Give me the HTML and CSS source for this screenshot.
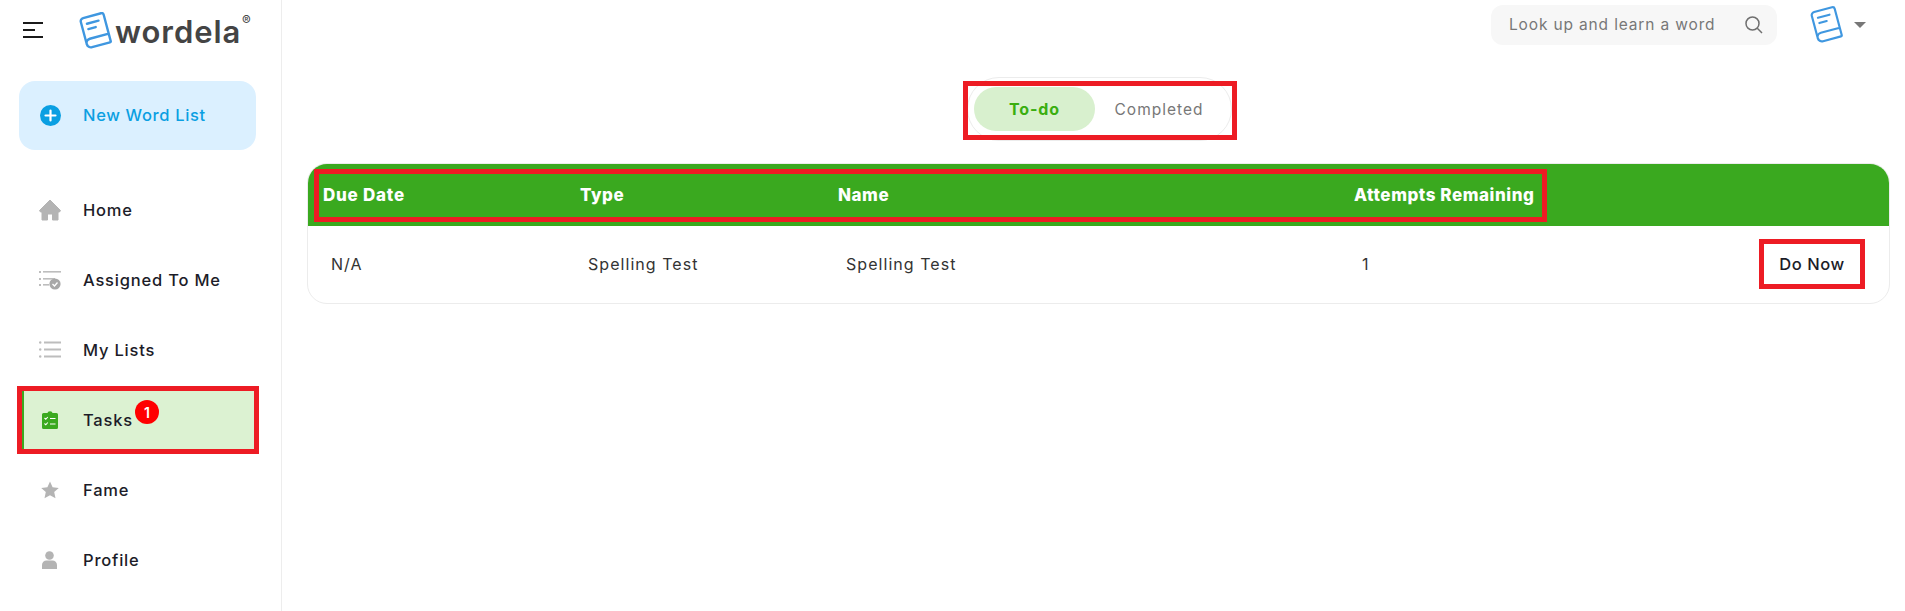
FILE: index.html
```html
<!DOCTYPE html>
<html lang="en">
<head>
<meta charset="utf-8">
<title>Wordela Tasks</title>
<link rel="stylesheet" href="styles.css">
</head>
<body>
<div class="app">
  <aside class="sidebar">
    <div class="brand">
      <svg class="burger" viewBox="0 0 20 16"><path d="M0 1h20M0 8h12M0 15h20" stroke="#1a1a1a" stroke-width="2" fill="none"/></svg>
      <svg class="book" viewBox="0 0 32 34"><g fill="none" stroke="#3f97e0" stroke-width="2.2" stroke-linecap="round" stroke-linejoin="round" transform="rotate(-15 16 17)"><path d="M5 26V6a3 3 0 0 1 3-3h17a2 2 0 0 1 2 2v25a1 1 0 0 1-1 1H9a4 4 0 0 1-4-4a4 4 0 0 1 4-4h18"/><path d="M10 9h11M10 14h7"/></g></svg>
      <span class="logo-text">wordela</span><span class="reg">®</span>
    </div>
    <div class="new-list">
      <svg class="plus" viewBox="0 0 21 21"><circle cx="10.5" cy="10.5" r="10.5" fill="#0a9fe2"/><path d="M5.5 10.5h10M10.5 5.5v10" stroke="#fff" stroke-width="2.2" stroke-linecap="round"/></svg>
      <span class="new-label">New Word List</span>
    </div>
    <nav class="nav">
      <div class="nav-item">
        <svg class="nav-icon" viewBox="0 0 22 22"><path d="M11 1 0.5 11.5l1 1.5H3v8h5.5v-6h5v6H19v-8h1.5l1-1.5z" fill="#b4b4b4" stroke="#b4b4b4" stroke-linejoin="round"/></svg>
        <span>Home</span>
      </div>
      <div class="nav-item">
        <svg class="nav-icon" viewBox="0 0 22 22"><g fill="#bdbdbd"><rect x="0" y="2" width="2" height="2"/><rect x="4" y="2" width="18" height="1.6"/><rect x="0" y="9" width="2" height="2"/><rect x="4" y="9" width="12" height="1.6"/><rect x="0" y="15" width="2" height="2"/><rect x="4" y="15" width="6" height="1.6"/></g><circle cx="16" cy="15" r="5.6" fill="#a8a8a8"/><path d="M13.5 15l2 2 3-3.5" stroke="#fff" stroke-width="1.3" fill="none"/></svg>
        <span>Assigned To Me</span>
      </div>
      <div class="nav-item">
        <svg class="nav-icon" viewBox="0 0 22 22"><g fill="#bdbdbd"><circle cx="1.2" cy="3.5" r="1.3"/><rect x="5" y="2.5" width="17" height="2"/><circle cx="1.2" cy="10.5" r="1.3"/><rect x="5" y="9.5" width="17" height="2"/><circle cx="1.2" cy="17.5" r="1.3"/><rect x="5" y="16.5" width="17" height="2"/></g></svg>
        <span>My Lists</span>
      </div>
      <div class="nav-item active">
        <svg class="nav-icon task-icon" viewBox="0 0 16 18"><path d="M1.5 2H5.5a2.5 1.8 0 0 1 5 0H14.500a1.500 1.500 0 0 1 1.500 1.500V16.500a1.500 1.500 0 0 1-1.500 1.500H1.500A1.500 1.500 0 0 1 0 16.500V3.500A1.500 1.500 0 0 1 1.500 2z" fill="#3aa91f"/><path d="M2.500 7l1.300 1.300 2-2.300M2.500 12.500l1.300 1.300 2-2.300M8 7.500h5.500M8 13h5.500" stroke="#fff" stroke-width="1.100" fill="none"/></svg>
        <span class="task-label">Tasks</span><span class="badge">1</span>
      </div>
      <div class="nav-item">
        <svg class="nav-icon star" viewBox="0 0 18 18"><path d="M9 .5l2.600 5.700 6.200.7-4.600 4.200 1.300 6.100L9 14.200 3.500 17.200l1.300-6.100L.2 6.900l6.200-.7z" fill="#b4b4b4"/></svg>
        <span>Fame</span>
      </div>
      <div class="nav-item">
        <svg class="nav-icon person" viewBox="0 0 15 18"><circle cx="7.500" cy="4.500" r="4.300" fill="#b4b4b4"/><path d="M0 18v-4a4.500 4.500 0 0 1 4.500-4.500h6A4.500 4.500 0 0 1 15 14v4z" fill="#b4b4b4"/></svg>
        <span>Profile</span>
      </div>
    </nav>
  </aside>
  <main class="main">
    <header class="topbar">
      <div class="search">
        <span class="search-text">Look up and learn a word</span>
        <svg class="search-icon" viewBox="0 0 18 18"><circle cx="7.500" cy="7.500" r="6.500" fill="none" stroke="#6f6f6f" stroke-width="1.500"/><path d="M12.300 12.300 17 17" stroke="#6f6f6f" stroke-width="1.500"/></svg>
      </div>
      <svg class="avatar" viewBox="0 0 32 34"><g fill="none" stroke="#3f97e0" stroke-width="2" stroke-linecap="round" stroke-linejoin="round" transform="rotate(-15 16 17)"><path d="M5 26V6a3 3 0 0 1 3-3h17a2 2 0 0 1 2 2v25a1 1 0 0 1-1 1H9a4 4 0 0 1-4-4a4 4 0 0 1 4-4h18"/><path d="M10 9h11M10 14h7"/></g></svg>
      <span class="caret"></span>
    </header>
    <div class="tabs">
      <span class="tab tab-on">To-do</span>
      <span class="tab tab-off">Completed</span>
      <span class="mark mark-tabs"></span>
    </div>
    <section class="card">
      <div class="row head">
        <span class="first">Due Date</span>
        <span>Type</span>
        <span>Name</span>
        <span>Attempts Remaining</span>
        <span class="mark mark-head"></span>
      </div>
      <div class="row body">
        <span class="first">N/A</span>
        <span>Spelling Test</span>
        <span>Spelling Test</span>
        <span>1</span>
        <span class="do-now">Do Now</span>
      </div>
    </section>
  </main>
</div>
</body>
</html>
```
FILE: styles.css
```css
* { box-sizing: border-box; }
html, body { margin: 0; height: 100%; overflow: hidden; }
body { background: #fff; font-family: Inter, "Open Sans", sans-serif; color: #1c1c28; }
.app { display: flex; height: 611px; }

.sidebar { width: 282px; flex: none; border-right: 1px solid #ededed; }
.brand { display: flex; align-items: center; height: 61px; padding: 0 0 0 23px; position: relative; }
.burger { width: 20px; height: 16px; margin-top: -1px; }
.book { width: 35px; height: 37px; margin-left: 35px; }
.logo-text { font-weight: 600; font-size: 31px; letter-spacing: 0.95px; color: #444; margin-left: 2px; margin-top: 1px; }
.reg { font-size: 13px; color: #444; position: absolute; left: 242px; top: 12px; }

.new-list { display: flex; align-items: center; height: 69px; margin: 20px 25px 0 19px; padding-left: 21px; border-radius: 16px; background: #dbf0ff; color: #0a9fe2; font-size: 16.500px; font-weight: 500; letter-spacing: .65px; }
.new-label { margin-top: -2px; }
.plus { width: 21px; height: 21px; margin-right: 22px; }

.nav { display: flex; flex-direction: column; gap: 12px; margin: 31px 27px 0 22px; }
.nav-item { display: flex; align-items: center; height: 58px; padding-left: 17px; font-size: 16.500px; font-weight: 500; letter-spacing: .8px; position: relative; }
.nav-icon { width: 22px; height: 22px; margin-right: 22px; flex: none; }
.task-icon { width: 16px; height: 18px; margin-left: 3px; margin-right: 25px; }
.star { width: 18px; height: 18px; margin-left: 2px; margin-right: 24px; }
.person { width: 15px; height: 18px; margin-left: 3px; margin-right: 26px; }
.active { background: #dcf2d2; border-left: 2px solid #3aa91f; padding-left: 15px; outline: 5px solid #ed1c24; }
.task-label { margin-right: 2px; }
.badge { position: absolute; left: 111px; top: 9px; width: 24px; height: 24px; border-radius: 50%; background: #f00; color: #fff; font-size: 14px; font-weight: 600; letter-spacing: 0; display: flex; align-items: center; justify-content: center; }

.main { flex: 1; min-width: 0; padding: 0 15px 0 25px; }
.topbar { display: flex; align-items: flex-start; justify-content: flex-end; height: 77px; padding-top: 5px; margin-right: 24px; }
.search { display: flex; align-items: center; justify-content: space-between; width: 286px; height: 40px; padding: 0 14px 0 18px; border-radius: 12px; background: #f7f7f7; margin-right: 32px; }
.search-text { font-size: 15.500px; color: #777; letter-spacing: .85px; margin-top: -2px; }
.search-icon { width: 18px; height: 18px; }
.avatar { width: 35px; height: 37px; margin-top: 1px; margin-right: 10px; }
.caret { width: 0; height: 0; margin-top: 17px; border-left: 6.500px solid transparent; border-right: 6.500px solid transparent; border-top: 6.500px solid #777; }

.tabs { display: flex; align-items: center; position: relative; width: 265px; height: 64px; margin: 0 0 22px 660px; padding-left: 6px; border: 1px solid #ececec; border-radius: 32px; }
.tab { width: 121px; height: 44px; border-radius: 22px; display: flex; align-items: center; justify-content: center; font-size: 15.500px; color: #777; letter-spacing: 1px; }
.tab-off { padding-left: 7px; }
.tab-on { background: #d8f0ce; color: #3aae10; font-size: 16px; font-weight: 700; letter-spacing: .9px; }
.mark { position: absolute; border: 5px solid #ed1c24; pointer-events: none; }
.mark-tabs { left: -5px; top: 3px; width: 274px; height: 59px; }

.card { border: 1px solid #ececec; border-radius: 20px; overflow: hidden; height: 141px; }
.row { display: grid; grid-template-columns: 258px 258px 516px 1fr auto; align-items: center; padding-left: 6px; position: relative; }
.head { height: 62px; background: #3aa91f; color: #fff; font-size: 17px; font-weight: 800; letter-spacing: .55px; }
.head span:not(.mark) { padding-left: 8px; white-space: nowrap; }
.head span.first:not(.mark) { padding-left: 9px; letter-spacing: .75px; }
.mark-head { left: 6px; top: 5px; width: 1233px; height: 53px; }
.body { height: 76px; font-size: 16px; color: #333; letter-spacing: 1.050px; }
.body span { padding-left: 16px; }
.body .first { padding-left: 17px; }
.body .do-now { width: 106px; height: 50px; margin-right: 24px; padding: 0; border: 5px solid #ed1c24; display: flex; align-items: center; justify-content: center; color: #1c1c28; font-size: 16.500px; font-weight: 500; letter-spacing: .6px; }
```
